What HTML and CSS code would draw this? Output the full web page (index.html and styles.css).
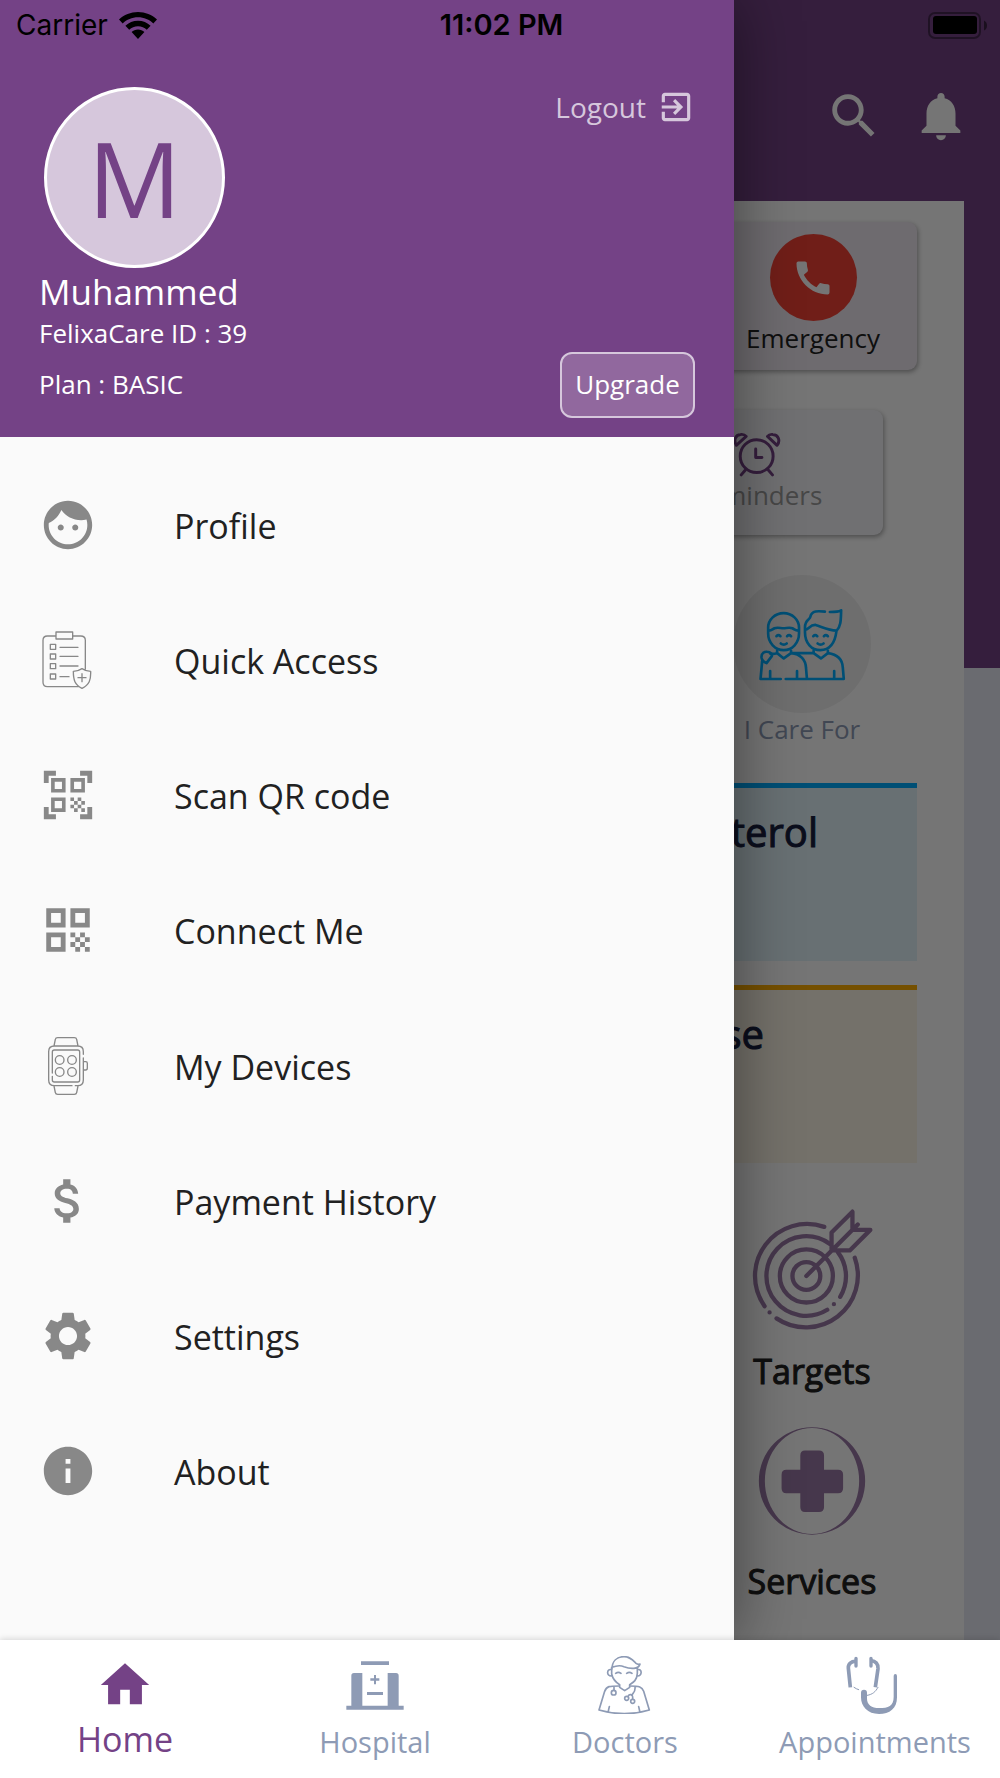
FILE: index.html
```html
<!DOCTYPE html>
<html lang="en">
<head>
<meta charset="utf-8">
<meta name="viewport" content="width=device-width, initial-scale=1">
<title>FelixaCare</title>
<link rel="stylesheet" href="styles.css">
</head>
<body>
<div class="app">
  <div class="stage">

    <main class="home">
      <header class="home-bar">
        <button class="icon-button" type="button" aria-label="Search">
          <svg class="icon" viewBox="0 0 24 24"><path d="M15.5 14h-.79l-.28-.27C15.41 12.59 16 11.11 16 9.5 16 5.91 13.09 3 9.5 3S3 5.91 3 9.5 5.91 16 9.5 16c1.61 0 3.09-.59 4.23-1.57l.27.28v.79l5 4.99L20.49 19l-4.99-5zm-6 0C7.01 14 5 11.99 5 9.5S7.01 5 9.5 5 14 7.01 14 9.5 11.99 14 9.5 14z"/></svg>
        </button>
        <button class="icon-button" type="button" aria-label="Notifications">
          <svg class="icon" viewBox="0 0 24 24"><path d="M12 22c1.1 0 2-.9 2-2h-4c0 1.1.89 2 2 2zm6-6v-5c0-3.07-1.64-5.64-4.5-6.32V4c0-.83-.67-1.5-1.5-1.5s-1.5.67-1.5 1.5v.68C7.63 5.36 6 7.92 6 11v5l-2 2v1h16v-1l-2-2z"/></svg>
        </button>
      </header>
      <div class="sheet">
        <section class="tile tile-emergency">
          <span class="call">
            <svg class="call-icon" viewBox="0 0 24 24"><path d="M20.01 15.38c-1.23 0-2.42-.2-3.53-.56-.35-.12-.74-.03-1.01.24l-1.57 1.97c-2.83-1.35-5.48-3.9-6.89-6.83l1.95-1.66c.27-.28.35-.67.24-1.02-.37-1.11-.56-2.3-.56-3.53 0-.54-.45-.99-.99-.99H4.19C3.65 3 3 3.24 3 3.99 3 13.28 10.73 21 20.01 21c.71 0 .99-.63.99-1.18v-3.45c0-.54-.45-.99-.99-.99z"/></svg>
          </span>
          <span class="tile-label">Emergency</span>
        </section>
        <section class="tile tile-reminders">
          <svg class="clock-icon" viewBox="101 124 146 136" fill="none" stroke-width="9" stroke-linecap="round" stroke-linejoin="round">
            <circle cx="173" cy="197" r="50"/>
            <path d="M170 175v26h19M138 240l-12 14M209 240l12 14M111 164c-9-14-3-32 13-33 8-1 14 2 17 6zM235 164c11-14 4-32-13-33-8-1-13 2-16 6z"/>
          </svg>
          <span class="tile-label tile-label-muted">Reminders</span>
        </section>
        <section class="care">
          <span class="care-disc">
            <svg class="care-icon" viewBox="175 648 264 220" fill="none" stroke-width="8" stroke-linecap="round" stroke-linejoin="round">
              <path d="M205 712v-5a46 43 0 0 1 93 0v18c0 28-20 50-46 50s-47-22-47-50zM206 716c8 1 10-3 18-7 10-4 18 0 27 0s18-4 27 0c8 4 10 8 19 7"/>
              <path d="M230 733q6-6 12 0M262 733q6-6 12 0M243 755q9 7 18 0M341 733q6-6 12 0M373 733q6-6 12 0M354 755q9 7 18 0"/>
              <path d="M376 659c-20-2-40-4-44 16-2 9-16 8-16 31v16c0 32 20 53 46 53s44-18 49-58c14-14 13-35 14-62-8 5-20 5-34 5M316 714c12-1 14-16 32-15 20 6 38 16 63 17"/>
              <path d="M232 777v7l20 16 22-16v-7M342 777v7l22 16 21-16v-7M232 784c-8 3-13 3-20 2M274 784c30 2 44 22 45 44l3 34h-64M275 784h66M385 784c30 4 44 20 45 44l3 34H322M243 862h-61l5-54M211 862v-24M292 862v-24M404 862v-24"/>
              <path d="M185 797c-1-14 10-18 17-17 10 1 16 6 14 13l-16 21c-8-3-14-8-15-17z"/>
            </svg>
          </span>
          <span class="care-label">I Care For</span>
        </section>
        <section class="vital vital-cholesterol"><h2 class="vital-title">Cholesterol</h2></section>
        <section class="vital vital-glucose"><h2 class="vital-title">Glucose</h2></section>
        <section class="shortcut shortcut-targets">
          <svg class="shortcut-icon targets-icon" viewBox="152 87 366 368" fill="none" stroke-width="13" stroke-linecap="round" stroke-linejoin="round">
            <path d="M372 141A157 157 0 0 0 192 380M228 417A157 157 0 0 0 464 234M388 192A120 120 0 1 0 381 391M420 352A120 120 0 0 0 413 217"/>
            <circle cx="318" cy="289" r="80"/><circle cx="318" cy="289" r="42"/>
            <path d="M207 399h.1M401 374h.1M318 289L473 134M394 212v-54l63-63v55h54l-62 62z"/>
          </svg>
          <h2 class="shortcut-title">Targets</h2>
        </section>
        <section class="shortcut shortcut-services">
          <svg class="shortcut-icon services-icon" viewBox="175 741 322 323" fill-rule="evenodd">
            <path d="M177 902.500a159 160.500 0 1 0 318 0a159 160.500 0 1 0-318 0zM195 902.500a141 158.500 0 1 1 282 0a141 158.500 0 1 1-282 0z"/>
            <path d="M315 811h42q15 0 15 15v43h42q15 0 15 15v40q0 15-15 15h-42v41q0 15-15 15h-42q-14 0-14-15v-41h-42q-14 0-14-15v-40q0-15 14-15h42v-43q0-15 14-15z"/>
          </svg>
          <h2 class="shortcut-title">Services</h2>
        </section>
      </div>
    </main>

    <div class="scrim"></div>

    <aside class="drawer">
      <header class="account">
        <div class="account-top">
          <div class="avatar">M</div>
          <button class="logout" type="button">
            <span>Logout</span>
            <svg class="logout-icon" viewBox="0 0 24 24"><path d="M10.090 15.590L11.500 17l5-5-5-5-1.410 1.410L12.670 11H3v2h9.670l-2.580 2.590zM19 3H5c-1.110 0-2 .9-2 2v4h2V5h14v14H5v-4H3v4c0 1.100.89 2 2 2h14c1.100 0 2-.9 2-2V5c0-1.100-.9-2-2-2z"/></svg>
          </button>
        </div>
        <h1 class="account-name">Muhammed</h1>
        <p class="account-id">FelixaCare ID : 39</p>
        <div class="account-plan">
          <p>Plan : BASIC</p>
          <button class="upgrade" type="button">Upgrade</button>
        </div>
      </header>

      <nav class="menu" aria-label="Main menu">
        <a class="menu-item" href="#profile">
          <svg class="icon" viewBox="0 0 24 24"><path d="M9 11.750c-.69 0-1.250.56-1.250 1.250s.56 1.250 1.250 1.250 1.250-.56 1.250-1.250-.56-1.250-1.250-1.250zm6 0c-.69 0-1.250.56-1.250 1.250s.56 1.250 1.250 1.250 1.250-.56 1.250-1.250-.56-1.250-1.250-1.250zM12 2C6.480 2 2 6.480 2 12s4.480 10 10 10 10-4.480 10-10S17.520 2 12 2zm0 18c-4.410 0-8-3.590-8-8 0-.29.02-.58.05-.86 2.360-1.050 4.230-2.980 5.210-5.370C11.070 8.330 14.050 10 17.420 10c.78 0 1.530-.09 2.250-.26.21.71.33 1.470.33 2.260 0 4.410-3.590 8-8 8z"/></svg>
          <span>Profile</span>
        </a>
        <a class="menu-item" href="#quick-access">
          <svg class="icon line-icon" viewBox="117 448 174 174" stroke-width="4">
            <path d="M168 463h-26q-13 0-13 13v126q0 13 13 13h96M218 463h24q14 0 14 13v86M168 451h50v21h-50zM151 488h16v15h-16zM151 517h16v15h-16zM151 546h16v15h-16zM151 577h16v15h-16zM180 497h54M180 524h54M180 553h54M180 585h27M246 561c-9 6-17 8-26 8 0 26 4 40 26 51 22-11 27-25 26-51-9 0-17-2-26-8zM246 576v24M234 588h24"/>
          </svg>
          <span>Quick Access</span>
        </a>
        <a class="menu-item" href="#scan">
          <svg class="icon" viewBox="0 0 24 24"><path d="M9.500 6.500v3h-3v-3h3M11 5H5v6h6V5zm-1.500 9.500v3h-3v-3h3M11 13H5v6h6v-6zm6.500-6.500v3h-3v-3h3M19 5h-6v6h6V5zm-6 8h1.500v1.500H13V13zm1.500 1.500H16V16h-1.500v-1.500zM16 13h1.500v1.500H16V13zm-3 3h1.500v1.500H13V16zm1.500 1.500H16V19h-1.500v-1.500zM16 16h1.500v1.500H16V16zm1.500-1.500H19V16h-1.500v-1.500zm0 3H19V19h-1.500v-1.500zM22 7h-2V4h-3V2h5v5zm0 15v-5h-2v3h-3v2h5zM2 22h5v-2H4v-3H2v5zM2 2v5h2V4h3V2H2z"/></svg>
          <span>Scan QR code</span>
        </a>
        <a class="menu-item" href="#connect">
          <svg class="icon" viewBox="0 0 24 24"><path d="M3 11h8V3H3v8zm2-6h4v4H5V5zM3 21h8v-8H3v8zm2-6h4v4H5v-4zM13 3v8h8V3h-8zm6 6h-4V5h4v4zM19 19h2v2h-2zM13 13h2v2h-2zM15 15h2v2h-2zM13 17h2v2h-2zM15 19h2v2h-2zM17 17h2v2h-2zM17 13h2v2h-2zM19 15h2v2h-2z"/></svg>
          <span>Connect Me</span>
        </a>
        <a class="menu-item" href="#devices">
          <svg class="icon line-icon" viewBox="117 526 174 174" stroke-width="4">
            <path d="M162 553l4-20q1-5 7-5h50q6 0 7 5l4 20M162 673l4 20q1 5 7 5h50q6 0 7-5l4-20M250 578v-8q0-17-17-17h-70q-17 0-17 17v85q0 17 17 17h53M226 672h7q17 0 17-17v-66M157 634v-63q0-6 6-6h70q6 0 6 6v84q0 6-6 6h-70q-6 0-6-6v-11M251 600h6q5 0 5 5v14q0 6-5 6h-6"/>
            <circle cx="179" cy="595" r="13"/><circle cx="216" cy="595" r="13"/><circle cx="179" cy="631" r="13"/><circle cx="216" cy="631" r="13"/>
          </svg>
          <span>My Devices</span>
        </a>
        <a class="menu-item" href="#payments">
          <svg class="icon" viewBox="0 0 24 24"><path d="M11.800 10.900c-2.270-.59-3-1.200-3-2.150 0-1.090 1.010-1.850 2.700-1.850 1.780 0 2.440.85 2.500 2.100h2.210c-.07-1.720-1.120-3.300-3.210-3.810V3h-3v2.160c-1.940.42-3.500 1.680-3.500 3.610 0 2.310 1.910 3.460 4.700 4.130 2.500.6 3 1.480 3 2.410 0 .69-.49 1.790-2.700 1.790-2.060 0-2.870-.92-2.980-2.100h-2.200c.12 2.190 1.760 3.420 3.680 3.830V21h3v-2.150c1.950-.37 3.500-1.500 3.500-3.550 0-2.840-2.430-3.810-4.700-4.400z"/></svg>
          <span>Payment History</span>
        </a>
        <a class="menu-item" href="#settings">
          <svg class="icon" viewBox="0 0 24 24"><path d="M19.140 12.940c.04-.3.060-.61.060-.94 0-.32-.02-.64-.07-.94l2.030-1.580c.18-.14.23-.41.12-.61l-1.920-3.320c-.12-.22-.37-.29-.59-.22l-2.390.96c-.5-.38-1.030-.7-1.620-.94l-.36-2.540c-.04-.24-.24-.41-.48-.41h-3.840c-.24 0-.43.17-.47.41l-.36 2.540c-.59.24-1.130.57-1.620.94l-2.390-.96c-.22-.08-.47 0-.59.22L2.740 8.870c-.12.21-.08.47.12.61l2.030 1.580c-.05.3-.09.63-.09.94s.02.64.07.94l-2.030 1.580c-.18.14-.23.41-.12.61l1.920 3.320c.12.22.37.29.59.22l2.390-.96c.5.38 1.030.7 1.620.94l.36 2.540c.05.24.24.41.48.41h3.840c.24 0 .44-.17.47-.41l.36-2.540c.59-.24 1.130-.56 1.620-.94l2.390.96c.22.08.47 0 .59-.22l1.920-3.320c.12-.22.07-.47-.12-.61l-2.010-1.580zM12 15.750c-2.070 0-3.750-1.680-3.750-3.750s1.680-3.750 3.750-3.750 3.750 1.680 3.750 3.750-1.680 3.750-3.750 3.750z"/></svg>
          <span>Settings</span>
        </a>
        <a class="menu-item" href="#about">
          <svg class="icon" viewBox="0 0 24 24"><path d="M12 2C6.480 2 2 6.480 2 12s4.480 10 10 10 10-4.480 10-10S17.520 2 12 2zm1 15h-2v-6h2v6zm0-8h-2V7h2v2z"/></svg>
          <span>About</span>
        </a>
      </nav>
    </aside>

    <div class="status">
      <span class="carrier">Carrier
        <svg class="wifi-icon" viewBox="0 0 38 27"><path d="M19 0C11.700 0 5 2.800 0 7.500l3.700 3.900C7.700 7.500 13 5.200 19 5.200s11.300 2.300 15.300 6.200L38 7.500C33 2.800 26.300 0 19 0zM19 8.800c-4.900 0-9.300 1.900-12.600 5l3.800 4c2.300-2.200 5.400-3.500 8.800-3.500s6.500 1.300 8.800 3.500l3.800-4c-3.300-3.100-7.700-5-12.600-5zM19 17.600c-2.500 0-4.700.9-6.400 2.500L19 27l6.400-6.900c-1.700-1.600-3.900-2.500-6.400-2.500z"/></svg>
      </span>
      <span class="time">11:02 PM</span>
      <svg class="battery-icon" viewBox="0 0 59 27"><rect x="1" y="1" width="51" height="25" rx="6" fill="none" stroke="#000" stroke-opacity=".4" stroke-width="2"/><rect x="5" y="4" width="44" height="18" rx="3"/><path d="M56 8.500q3 1.500 3 5t-3 5z" fill-opacity=".5"/></svg>
    </div>
  </div>

  <nav class="tabs" aria-label="Sections">
    <a class="tab tab-active" href="#home" aria-current="page">
      <svg class="tab-icon" viewBox="0 0 24 24" fill="currentColor"><path d="M10 20v-6h4v6h5v-8h3L12 3 2 12h3v8z"/></svg>
      <span>Home</span>
    </a>
    <a class="tab" href="#hospital">
      <svg class="tab-icon" viewBox="1038 107 174 174" fill="currentColor"><path d="M1083 123h84v11h-84zM1054 256v-90q0-8 8-8h25v98zM1163 256v-98h25q8 0 8 8v90zM1039 256h172v12h-172zM1122 164h6v10h10v7h-10v11h-6v-11h-11v-7h11zM1101 215h48v9h-48z"/></svg>
      <span>Hospital</span>
    </a>
    <a class="tab" href="#doctors">
      <svg class="tab-icon" viewBox="288 108 174 174" fill="none" stroke="currentColor" stroke-width="5" stroke-linecap="round" stroke-linejoin="round">
        <path d="M336 148c0-24 14-38 36-38 18 0 26 10 36 20 4 3 7 4 12 2-4 16-28 16-48 8-14-6-26-2-36 2M335 142v20c4 18 14 26 24 32v8l15 10 15-10v-8c12-7 22-14 23-34v-18M334 149c-14-4-16 20 1 19M413 149c14-4 14 20-1 19M347 160q8-6 16 0M380 160q8-6 16 0"/>
        <path d="M358 198c-30 0-38 0-44 16l-17 56c48 14 104 14 151 0l-17-56c-5-14-12-16-42-16M342 200v11M405 200c2 18-6 18-10 26M384 229c4-8 14-6 14 2v6M328 260l-3 13M416 260l3 13"/>
        <circle cx="341" cy="218" r="7"/><circle cx="380" cy="235" r="6"/><circle cx="398" cy="244" r="6"/>
      </svg>
      <span>Doctors</span>
    </a>
    <a class="tab" href="#appointments">
      <svg class="tab-icon" viewBox="1038 108 174 174" fill="none" stroke="currentColor" stroke-linecap="round" stroke-linejoin="round">
        <path stroke-width="10" d="M1068 115v23M1113 115v23"/>
        <path stroke-width="11" stroke-linecap="butt" d="M1068 124c-14-1-24 8-23 20l6 58M1113 122c14 1 22 10 21 24l-8 56"/>
        <path stroke-width="3" d="M1062 202q7 5 14 7M1102 226c16-3 24-10 32-24"/>
        <path stroke="none" fill="currentColor" d="M1083 218q0-9 9-9t9 9v18c0 18 14 28 36 28 28 0 44-6 44-34v-62q0-6 5-6t5 6v64c0 34-22 50-54 50-34 0-54-22-54-50z"/>
      </svg>
      <span>Appointments</span>
    </a>
  </nav>
</div>
</body>
</html>
```
FILE: styles.css
```css
:root {
  --purple: #744286;
  --lilac: #d6c7dc;
  --slate: #8e9bb5;
}

* {
  box-sizing: border-box;
}

body {
  margin: 0;
  font-family: "Open Sans", "Noto Sans", sans-serif;
  color: #212121;
}

h1, h2, p {
  margin: 0;
  font-weight: 400;
}

button {
  border: 0;
  padding: 0;
  background: none;
  font: inherit;
  color: inherit;
}

a {
  color: inherit;
  text-decoration: none;
}

svg {
  display: block;
  flex: none;
}

.app {
  display: flex;
  flex-direction: column;
  min-height: 100vh;
}

/* Home, scrim, drawer and status bar are layers of one grid cell */
.stage {
  flex: 1;
  display: grid;
  grid-template-columns: 100%;
  overflow: hidden;
}

.stage > * {
  grid-area: 1 / 1;
}

.icon {
  width: 58px;
  height: 58px;
  fill: currentColor;
}

.line-icon {
  fill: none;
  stroke: currentColor;
  stroke-linecap: round;
  stroke-linejoin: round;
}

/* Status bar */
.status {
  align-self: start;
  display: grid;
  grid-template-columns: 1fr auto 1fr;
  align-items: center;
  padding: 8px 13px 0 16px;
  font: 28px/34px Inter, "Liberation Sans", sans-serif;
  color: #000;
}

.carrier {
  display: flex;
  align-items: center;
  gap: 11px;
}

.wifi-icon {
  width: 38px;
  height: 27px;
}

.time {
  font-size: 29px;
  font-weight: 600;
}

.battery-icon {
  justify-self: end;
  width: 59px;
  height: 27px;
}

/* Home screen */
.home {
  display: flex;
  flex-direction: column;
  background: linear-gradient(var(--purple) 668px, #e6e9f3 668px);
}

.home-bar {
  display: flex;
  justify-content: flex-end;
  gap: 29px;
  padding: 87px 30px 56px;
  color: #fff;
}

.sheet {
  flex: 1;
  display: flex;
  flex-direction: column;
  align-items: flex-end;
  margin-right: 36px;
  padding: 21px 47px 0 0;
  background: #fff;
}

.tile {
  display: flex;
  flex-direction: column;
  align-items: center;
  border-radius: 9px;
  box-shadow: 1px 2px 5px rgba(0, 0, 0, .35);
}

.tile-emergency {
  width: 208px;
  padding: 12px 0 15px;
  background: #efe9f1;
}

.tile-reminders {
  width: 252px;
  margin: 40px 34px 0 0;
  padding: 22px 0;
  background: #f4f4f8;
}

.tile-label {
  font-size: 26px;
  line-height: 34px;
}

.tile-label-muted {
  line-height: 36px;
  color: #9c9c9c;
}

.call {
  display: grid;
  place-items: center;
  width: 87px;
  height: 87px;
  border-radius: 50%;
  background: #f44336;
}

.call-icon {
  width: 44px;
  height: 44px;
  fill: #fff;
}

.clock-icon {
  width: 48px;
  height: 45px;
  stroke: var(--purple);
}

.care {
  display: flex;
  flex-direction: column;
  align-items: center;
  margin: 40px 46px 38px 0;
}

.care-disc {
  display: grid;
  place-items: center;
  width: 138px;
  height: 138px;
  border-radius: 50%;
  background: #f0f0f0;
}

.care-icon {
  width: 88px;
  height: 73px;
  stroke: #00adff;
}

.care-label {
  font-size: 26px;
  line-height: 32px;
  color: var(--slate);
}

.vital {
  width: 336px;
  min-height: 178px;
  padding-top: 20px;
  border-top: 5px solid;
  text-align: right;
}

.vital-cholesterol {
  padding-right: 99px;
  border-color: #00adff;
  background: #e2f3fa;
}

.vital-glucose {
  margin-top: 24px;
  padding-right: 153px;
  border-color: #ffae00;
  background: #fdf6e6;
}

.vital-title {
  font-size: 40px;
  line-height: 48px;
  color: #18203f;
  -webkit-text-stroke: 1px currentColor;
}

.shortcut {
  display: flex;
  flex-direction: column;
  align-items: center;
  width: 210px;
}

.shortcut-targets {
  gap: 18px;
  margin-top: 46px;
}

.shortcut-services {
  gap: 24px;
  margin-top: 34px;
}

.targets-icon {
  width: 122px;
  height: 122px;
  stroke: #9a78a5;
}

.services-icon {
  width: 108px;
  height: 108px;
  fill: #9a78a5;
}

.shortcut-title {
  font-size: 34px;
  line-height: 44px;
  -webkit-text-stroke: 1px currentColor;
}

.scrim {
  background: rgba(0, 0, 0, .54);
}

/* Drawer */
.drawer {
  display: flex;
  flex-direction: column;
  width: 73.4%;
  background: #fafafa;
  box-shadow: 0 0 60px rgba(0, 0, 0, .45);
}

.account {
  padding: 87px 39px 19px;
  background: var(--purple);
  color: #fff;
}

.account-top {
  display: flex;
  justify-content: space-between;
  align-items: flex-start;
  padding-left: 5px;
}

.avatar {
  width: 181px;
  height: 181px;
  border: 3px solid #fff;
  border-radius: 50%;
  background: var(--lilac);
  font-size: 104px;
  line-height: 175px;
  text-align: center;
  color: var(--purple);
}

.logout {
  display: flex;
  align-items: center;
  gap: 11px;
  font-size: 28px;
  line-height: 40px;
  color: var(--lilac);
}

.logout-icon {
  width: 38px;
  height: 38px;
  fill: currentColor;
}

.account-name {
  font-size: 35px;
  line-height: 47px;
}

.account-id {
  font-size: 26px;
  line-height: 37px;
}

.account-plan {
  display: flex;
  justify-content: space-between;
  align-items: center;
  font-size: 26px;
  line-height: 34px;
}

.upgrade {
  width: 135px;
  height: 66px;
  padding-bottom: 2px;
  border: 2px solid var(--lilac);
  border-radius: 12px;
  background: #91689e;
}

.account-plan p {
  padding-bottom: 2px;
}

.menu {
  flex: 1;
  display: flex;
  flex-direction: column;
  padding: 20px 0 101px;
}

.menu-item {
  flex: 1;
  display: flex;
  align-items: center;
  gap: 77px;
  padding-left: 39px;
  font-size: 34px;
}

.menu-item span {
  padding-top: 2px;
}

.menu-item .icon {
  color: #888;
}

/* Bottom tabs */
.tabs {
  display: grid;
  grid-template-columns: repeat(4, 1fr);
  background: #fff;
  box-shadow: 0 -1px 6px rgba(0, 0, 0, .15);
  z-index: 1;
}

.tab {
  display: flex;
  flex-direction: column;
  align-items: center;
  gap: 7px;
  padding: 16px 0 15px;
  font-size: 29px;
  line-height: 42px;
  color: var(--slate);
}

.tab-active {
  gap: 4px;
  font-size: 34px;
  color: var(--purple);
}

.tab-icon {
  width: 58px;
  height: 58px;
}
```
